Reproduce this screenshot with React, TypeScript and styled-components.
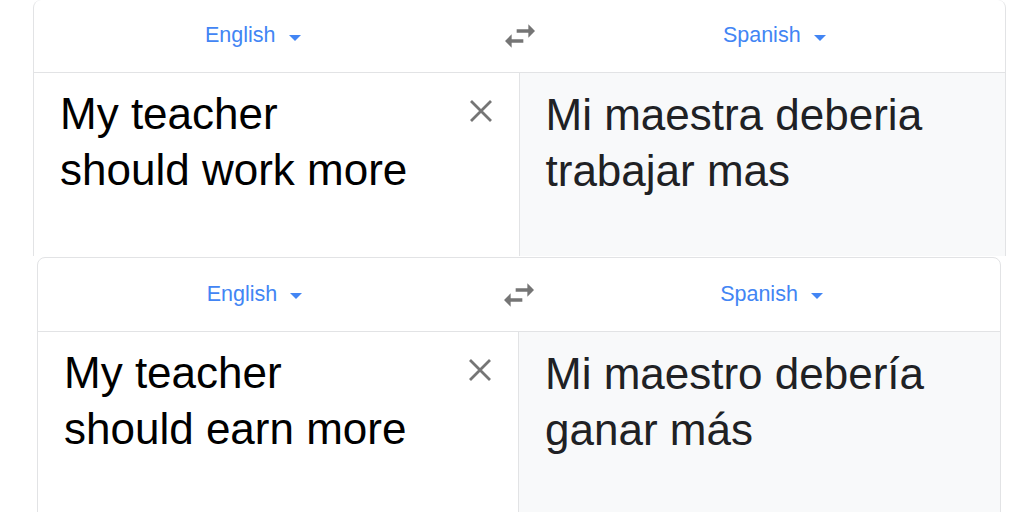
import React from "react";
import styled, { createGlobalStyle } from "styled-components";

const Global = createGlobalStyle`
  html, body { margin: 0; padding: 0; background: #ffffff; }
  body { font-family: "Liberation Sans", Arial, sans-serif; overflow: hidden; }
`;

const Page = styled.div`
  width: 1024px;
  height: 512px;
  display: flex;
  flex-direction: column;
  overflow: hidden;
  background: #ffffff;
`;

const Shot = styled.div<{ $left: number; $top: number }>`
  height: 256px;
  flex: none;
  overflow: hidden;
  padding-left: ${(p) => p.$left}px;
  padding-top: ${(p) => p.$top}px;
  box-sizing: border-box;
`;

const Card = styled.div<{ $width: number; $clipTop?: boolean }>`
  width: ${(p) => p.$width}px;
  box-sizing: border-box;
  border: 1px solid #e2e3e5;
  border-top: ${(p) => (p.$clipTop ? "none" : "1px solid #e2e3e5")};
  border-radius: 8px 8px 0 0;
  background: #ffffff;
  overflow: hidden;
`;

const Header = styled.div<{ $height: number }>`
  height: ${(p) => p.$height}px;
  display: grid;
  grid-template-columns: 1fr 48px 1fr;
  align-items: center;
  border-bottom: 1px solid #e2e3e5;
`;

const LangButton = styled.div<{ $padRight?: number }>`
  display: flex;
  align-items: center;
  justify-content: center;
  gap: 13px;
  padding-right: ${(p) => p.$padRight ?? 0}px;
  font-size: 21.5px;
  color: #4285f4;
  line-height: 1;
`;

const Caret = styled.span`
  width: 0;
  height: 0;
  border-left: 6.5px solid transparent;
  border-right: 6.5px solid transparent;
  border-top: 6.5px solid #4285f4;
  margin-top: 3px;
`;

const SwapCell = styled.div`
  display: flex;
  align-items: center;
  justify-content: center;
`;

const Body = styled.div`
  display: grid;
  grid-template-columns: 1fr 1fr;
  height: 400px;
`;

const SourcePane = styled.div`
  display: flex;
  justify-content: space-between;
  align-items: flex-start;
  padding: 13px 26px 0 26px;
  border-right: 1px solid #e2e3e5;
`;

const ResultPane = styled.div`
  padding: 14px 24px 0 26px;
  background: #f8f9fa;
`;

const BigText = styled.div<{ $color: string }>`
  font-size: 44px;
  line-height: 56px;
  color: ${(p) => p.$color};
`;

const ClearButton = styled.div`
  width: 24px;
  height: 24px;
  margin-top: 13px;
  display: flex;
  align-items: center;
  justify-content: center;
  flex: none;
`;

const SwapIcon = () => (
  <svg width="40" height="40" viewBox="0 0 24 24" fill="#757575">
    <path d="M6.99 11L3 15l3.99 4v-3H14v-2H6.99v-3zM21 9l-3.99-4v3H10v2h7.01v3L21 9z" />
  </svg>
);

const CloseIcon = () => (
  <svg width="24" height="24" viewBox="0 0 24 24">
    <path d="M2 2L22 22M22 2L2 22" stroke="#757575" strokeWidth="2.8" fill="none" />
  </svg>
);

type Props = {
  width: number;
  clipTop?: boolean;
  headerHeight: number;
  source: string[];
  result: string;
};

const Translator = ({ width, clipTop, headerHeight, source, result }: Props) => (
  <Card $width={width} $clipTop={clipTop}>
    <Header $height={headerHeight}>
      <LangButton $padRight={24}>
        English
        <Caret />
      </LangButton>
      <SwapCell>
        <SwapIcon />
      </SwapCell>
      <LangButton>
        Spanish
        <Caret />
      </LangButton>
    </Header>
    <Body>
      <SourcePane>
        <BigText $color="#000000">
          {source[0]}
          <br />
          {source[1]}
        </BigText>
        <ClearButton>
          <CloseIcon />
        </ClearButton>
      </SourcePane>
      <ResultPane>
        <BigText $color="#202124">{result}</BigText>
      </ResultPane>
    </Body>
  </Card>
);

export default function App() {
  return (
    <Page>
      <Global />
      <Shot $left={33} $top={0}>
        <Translator
          width={973}
          clipTop
          headerHeight={72}
          source={["My teacher", "should work more"]}
          result="Mi maestra deberia trabajar mas"
        />
      </Shot>
      <Shot $left={37} $top={1}>
        <Translator
          width={964}
          headerHeight={73}
          source={["My teacher", "should earn more"]}
          result="Mi maestro debería ganar más"
        />
      </Shot>
    </Page>
  );
}
